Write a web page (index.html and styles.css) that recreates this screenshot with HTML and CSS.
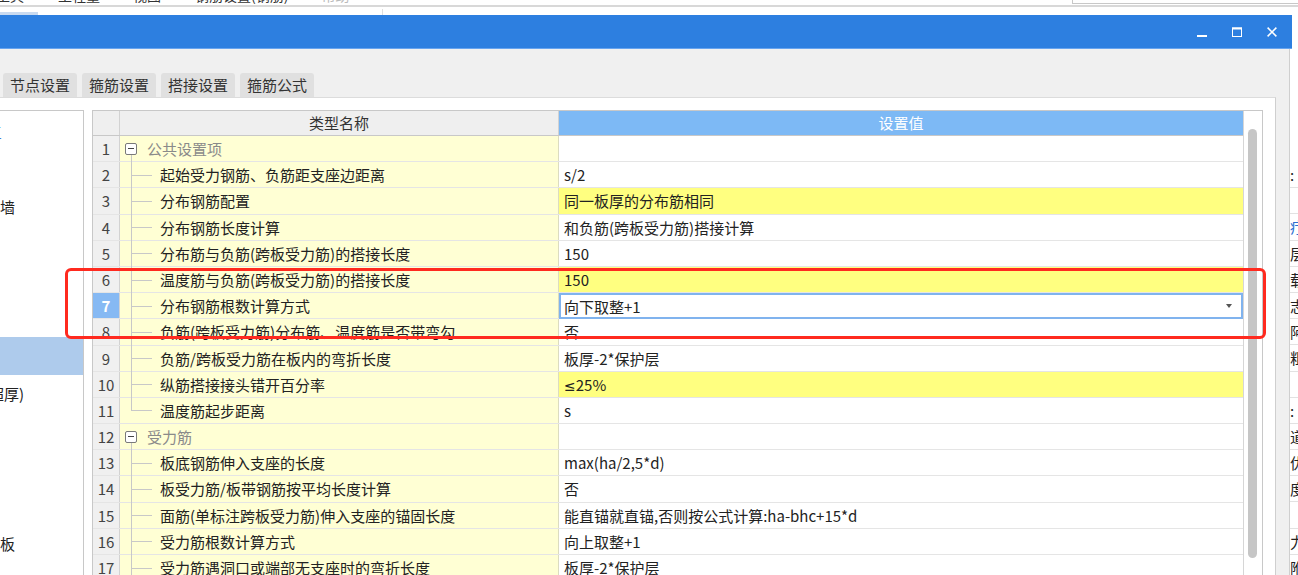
FILE: index.html
```html
<!DOCTYPE html>
<html lang="zh-CN">
<head>
<meta charset="utf-8">
<title>钢筋设置</title>
<link rel="stylesheet" href="styles.css">
</head>
<body>
<div class="topstrip">
  <div class="menu">
    <span class="mi mi1">工具</span>
    <span class="mi mi2">工程量</span>
    <span class="mi mi3">视图</span>
    <span class="mi mi4">钢筋设置(钢筋)</span>
    <span class="mi mi5 dim">帮助</span>
    <div class="topbox"></div>
  </div>
  <div class="subbar">
    <div class="subtab"></div>
    <div class="subdiv"></div>
  </div>
</div>

<div class="titlebar">
  <div class="ctrls">
    <div class="ctrl"><svg width="10" height="10" viewBox="0 0 10 10"><rect x="0" y="8" width="10" height="2" fill="#fff"/></svg></div>
    <div class="ctrl"><svg width="10" height="10" viewBox="0 0 10 10"><rect x="0.5" y="1" width="9" height="8.5" fill="none" stroke="#fff" stroke-width="1"/><rect x="0" y="0.5" width="10" height="2" fill="#fff"/></svg></div>
    <div class="ctrl"><svg width="10" height="10" viewBox="0 0 10 10"><path d="M0.6 0.6 L9.4 9.4 M9.4 0.6 L0.6 9.4" stroke="#fff" stroke-width="1.5" fill="none"/></svg></div>
  </div>
</div>

<div class="main">
  <div class="window">
    <div class="tabs">
      <div class="tab">节点设置</div>
      <div class="tab">箍筋设置</div>
      <div class="tab">搭接设置</div>
      <div class="tab">箍筋公式</div>
    </div>
    <div class="pane">
      <div class="leftpanel">
        <div class="lrow"><span class="ltext blue cut13">三</span></div>
        <div class="lrow"></div>
        <div class="lrow"><span class="ltext cut30">剪力墙</span></div>
        <div class="lrow"></div>
        <div class="lrow"></div>
        <div class="lrow"></div>
        <div class="lrow lsel"></div>
        <div class="lrow"><span class="ltext cut16">(超厚)</span></div>
        <div class="lrow"></div>
        <div class="lrow"></div>
        <div class="lrow"></div>
        <div class="lrow"><span class="ltext cut15">楼板</span></div>
      </div>

      <div class="table">
        <div class="grid">
          <div class="hrow">
            <div class="h-num"></div>
            <div class="h-name">类型名称</div>
            <div class="h-val">设置值</div>
          </div>

          <div class="row">
            <div class="c-num">1</div>
            <div class="c-name grp"><span class="tv gdown"></span><span class="gi"></span><span class="gtext">公共设置项</span></div>
            <div class="c-val"></div>
          </div>
          <div class="row">
            <div class="c-num">2</div>
            <div class="c-name"><span class="tv"></span><span class="th"></span>起始受力钢筋、负筋距支座边距离</div>
            <div class="c-val">s/2</div>
          </div>
          <div class="row">
            <div class="c-num">3</div>
            <div class="c-name"><span class="tv"></span><span class="th"></span>分布钢筋配置</div>
            <div class="c-val hl">同一板厚的分布筋相同</div>
          </div>
          <div class="row">
            <div class="c-num">4</div>
            <div class="c-name"><span class="tv"></span><span class="th"></span>分布钢筋长度计算</div>
            <div class="c-val">和负筋(跨板受力筋)搭接计算</div>
          </div>
          <div class="row">
            <div class="c-num">5</div>
            <div class="c-name"><span class="tv"></span><span class="th"></span>分布筋与负筋(跨板受力筋)的搭接长度</div>
            <div class="c-val">150</div>
          </div>
          <div class="row">
            <div class="c-num">6</div>
            <div class="c-name"><span class="tv"></span><span class="th"></span>温度筋与负筋(跨板受力筋)的搭接长度</div>
            <div class="c-val hl">150</div>
          </div>
          <div class="row">
            <div class="c-num sel">7</div>
            <div class="c-name"><span class="tv"></span><span class="th"></span>分布钢筋根数计算方式</div>
            <div class="c-val edit"><span class="etext">向下取整+1</span><span class="arrow"></span></div>
          </div>
          <div class="row">
            <div class="c-num">8</div>
            <div class="c-name"><span class="tv"></span><span class="th"></span>负筋(跨板受力筋)分布筋、温度筋是否带弯勾</div>
            <div class="c-val">否</div>
          </div>
          <div class="row">
            <div class="c-num">9</div>
            <div class="c-name"><span class="tv"></span><span class="th"></span>负筋/跨板受力筋在板内的弯折长度</div>
            <div class="c-val">板厚-2*保护层</div>
          </div>
          <div class="row">
            <div class="c-num">10</div>
            <div class="c-name"><span class="tv"></span><span class="th"></span>纵筋搭接接头错开百分率</div>
            <div class="c-val hl"><span class="lat">≤</span>25%</div>
          </div>
          <div class="row">
            <div class="c-num">11</div>
            <div class="c-name"><span class="tv last"></span><span class="th"></span>温度筋起步距离</div>
            <div class="c-val">s</div>
          </div>
          <div class="row">
            <div class="c-num">12</div>
            <div class="c-name grp"><span class="tv gdown"></span><span class="gi"></span><span class="gtext">受力筋</span></div>
            <div class="c-val"></div>
          </div>
          <div class="row">
            <div class="c-num">13</div>
            <div class="c-name"><span class="tv"></span><span class="th"></span>板底钢筋伸入支座的长度</div>
            <div class="c-val">max(ha/2,5*d)</div>
          </div>
          <div class="row">
            <div class="c-num">14</div>
            <div class="c-name"><span class="tv"></span><span class="th"></span>板受力筋/板带钢筋按平均长度计算</div>
            <div class="c-val">否</div>
          </div>
          <div class="row">
            <div class="c-num">15</div>
            <div class="c-name"><span class="tv"></span><span class="th"></span>面筋(单标注跨板受力筋)伸入支座的锚固长度</div>
            <div class="c-val">能直锚就直锚,否则按公式计算:ha-bhc+15*d</div>
          </div>
          <div class="row">
            <div class="c-num">16</div>
            <div class="c-name"><span class="tv"></span><span class="th"></span>受力筋根数计算方式</div>
            <div class="c-val">向上取整+1</div>
          </div>
          <div class="row">
            <div class="c-num">17</div>
            <div class="c-name"><span class="tv"></span><span class="th"></span>受力筋遇洞口或端部无支座时的弯折长度</div>
            <div class="c-val">板厚-2*保护层</div>
          </div>
        </div>
        <div class="vscroll"><div class="thumb"></div></div>
      </div>
    </div>
  </div>

  <div class="outside">
    <div class="orow">:</div>
    <div class="orow"></div>
    <div class="orow oblue">疗</div>
    <div class="orow">层</div>
    <div class="orow">载</div>
    <div class="orow">志</div>
    <div class="orow">阿</div>
    <div class="orow">粗</div>
    <div class="orow"></div>
    <div class="orow">:</div>
    <div class="orow">道</div>
    <div class="orow">优</div>
    <div class="orow">度</div>
    <div class="orow"></div>
    <div class="orow">力</div>
    <div class="orow">附</div>
  </div>
</div>

<div class="redbox"></div>
</body>
</html>
```

FILE: styles.css
```css
* { box-sizing: border-box; margin: 0; padding: 0; }

html, body {
  width: 1298px;
  height: 575px;
  overflow: hidden;
  background: #ffffff;
}

body {
  position: relative;
  font-family: "Noto Sans CJK SC", "Microsoft YaHei", sans-serif;
  font-size: 15px;
  color: #222;
}

/* ---------- top strip (outer app, mostly cut off) ---------- */
.topstrip { height: 15px; }

.menu {
  display: flex;
  height: 7px;
  overflow: hidden;
  border-bottom: 2px solid #d8d8d8;
  font-size: 14px;
}
.mi {
  display: block;
  line-height: 16px;
  margin-top: -13px;
  white-space: nowrap;
  color: #333;
}
.mi1 { margin-left: -4px; }
.mi2 { margin-left: 34px; }
.mi3 { margin-left: 33px; }
.mi4 { margin-left: 34px; }
.mi5 { margin-left: 33px; }
.dim { color: #bbb; }
.topbox {
  margin-left: auto;
  width: 226px;
  height: 4px;
  border-left: 1px solid #c8c8c8;
  border-bottom: 1px solid #c8c8c8;
}

.subbar {
  display: flex;
  align-items: flex-end;
  height: 8px;
}
.subtab {
  width: 38px;
  height: 3px;
  background: #c9daf0;
}
.subdiv {
  margin-left: 344px;
  width: 1px;
  height: 6px;
  background: #dedede;
}

/* ---------- title bar ---------- */
.titlebar {
  width: 1292px;
  height: 34px;
  background: #2d7fe0;
  border-bottom: 1px solid #67a4ef;
  display: flex;
  justify-content: flex-end;
}
.ctrls {
  display: flex;
  margin-right: 3px;
}
.ctrl {
  width: 35px;
  height: 33px;
  display: flex;
  align-items: center;
  justify-content: center;
}
.ctrl svg { display: block; }

/* ---------- main area ---------- */
.main {
  display: flex;
  height: 527px;
}

.window {
  width: 1290px;
  background: #f0f0f0;
  border-right: 1px solid #cfcfcf;
  padding-top: 24px;
  display: flex;
  flex-direction: column;
}

.tabs {
  display: flex;
  gap: 5px;
  padding-left: 3px;
  height: 24px;
}
.tab {
  width: 74px;
  height: 24px;
  line-height: 24px;
  text-align: center;
  background: #e0e0e0;
  border-radius: 3px 3px 0 0;
  color: #333;
  font-size: 15px;
}

.pane {
  flex: 1;
  width: 1276px;
  background: #ffffff;
  border-top: 1px solid #dcdcdc;
  border-right: 1px solid #cfcfcf;
  padding-top: 12px;
  display: flex;
  align-items: flex-start;
}

/* ---------- left tree panel ---------- */
.leftpanel {
  width: 84px;
  height: 480px;
  border-top: 1px solid #c8c8c8;
  border-right: 1px solid #c8c8c8;
  padding-top: 1.25px;
  margin-right: 8px;
  overflow: hidden;
}
.lrow {
  height: 37.5px;
  display: flex;
  align-items: center;
  overflow: hidden;
  white-space: nowrap;
}
.lsel { background: #aecbec; }
.ltext { display: block; font-size: 15px; color: #222; }
.blue { color: #3b7fd6; }
.cut13 { margin-left: -13px; }
.cut30 { margin-left: -30px; }
.cut16 { margin-left: -16px; }
.cut15 { margin-left: -15px; }

/* ---------- settings table ---------- */
.table {
  width: 1171px;
  height: 480px;
  border: 1px solid #c8c8c8;
  border-bottom: none;
  display: flex;
  overflow: hidden;
}
.grid {
  width: 1150px;
  display: flex;
  flex-direction: column;
}

.hrow {
  display: flex;
  height: 25px;
  flex: none;
  border-bottom: 1px solid #c8c8c8;
}
.h-num {
  width: 27px;
  background: #efefef;
  border-right: 1px solid #d2d2d2;
}
.h-name {
  width: 439px;
  background: #efefef;
  border-right: 1px solid #d2d2d2;
  text-align: center;
  line-height: 24px;
  color: #333;
}
.h-val {
  width: 684px;
  background: #7db9f5;
  text-align: center;
  line-height: 24px;
  color: #ffffff;
}

.row {
  display: flex;
  height: 26.2px;
  flex: none;
  border-bottom: 1px solid rgba(0, 0, 0, 0.1);
}
.c-num {
  width: 27px;
  background: #f0f0f0;
  border-right: 1px solid #d2d2d2;
  text-align: center;
  line-height: 25px;
  color: #444;
  font-size: 15px;
}
.c-num.sel {
  background: #86b9f3;
  color: #ffffff;
  font-weight: bold;
}
.c-name {
  position: relative;
  width: 439px;
  background: #ffffd4;
  border-right: 1px solid #dcdcc0;
  padding-left: 40px;
  line-height: 25px;
  white-space: nowrap;
  color: #222;
}
.c-name.grp {
  padding-left: 5px;
  display: flex;
  align-items: center;
}
.gi {
  position: relative;
  display: block;
  width: 12px;
  height: 12px;
  border: 1px solid #7a7a7a;
  border-radius: 2px;
  background: #ffffff;
  margin-right: 10px;
}
.gi::after {
  content: "";
  position: absolute;
  left: 2px;
  top: 4px;
  width: 6px;
  height: 1.5px;
  background: #444;
}
.gtext { color: #8a8a8a; }

.tv {
  position: absolute;
  left: 11px;
  top: 0;
  bottom: -1px;
  width: 1px;
  background: #c8c8c8;
}
.tv.last { bottom: 50%; }
.tv.gdown { top: calc(50% + 6px); }
.th {
  position: absolute;
  left: 11px;
  top: 50%;
  width: 21px;
  height: 1px;
  background: #c8c8c8;
}

.c-val {
  width: 684px;
  padding-left: 5px;
  line-height: 25px;
  white-space: nowrap;
  color: #222;
  background: #ffffff;
}
.c-val.hl { background: #ffff80; }
.lat { font-family: "DejaVu Sans", "Noto Sans", sans-serif; font-size: 14px; }
.c-val.edit {
  display: flex;
  align-items: center;
  padding-left: 3px;
  padding-right: 9px;
  border: 2px solid #80b3ee;
  margin-bottom: -1px;
}
.etext { flex: 1; line-height: 21px; }
.arrow {
  width: 0;
  height: 0;
  border-left: 3.5px solid transparent;
  border-right: 3.5px solid transparent;
  border-top: 4px solid #555;
}

.vscroll {
  width: 19px;
  border-left: 1px solid #d6d6d6;
  background: #ffffff;
  padding-top: 18px;
  padding-left: 4px;
}
.thumb {
  width: 9px;
  height: 429px;
  border-radius: 5px;
  background: #c6c6c6;
}

/* ---------- outside window (next app, cut off) ---------- */
.outside {
  flex: 1;
  padding-top: 113px;
  overflow: hidden;
  background: #ffffff;
}
.orow {
  height: 26.2px;
  line-height: 25px;
  border-bottom: 1px solid #e2e2e2;
  white-space: nowrap;
  overflow: hidden;
  font-size: 15px;
  color: #222;
}
.oblue { color: #2a6fd0; }

/* ---------- annotation overlay ---------- */
.redbox {
  position: absolute;
  left: 65px;
  top: 268px;
  width: 1201px;
  height: 71px;
  border: 3px solid #ff2a1f;
  border-radius: 6px;
  pointer-events: none;
}
```
